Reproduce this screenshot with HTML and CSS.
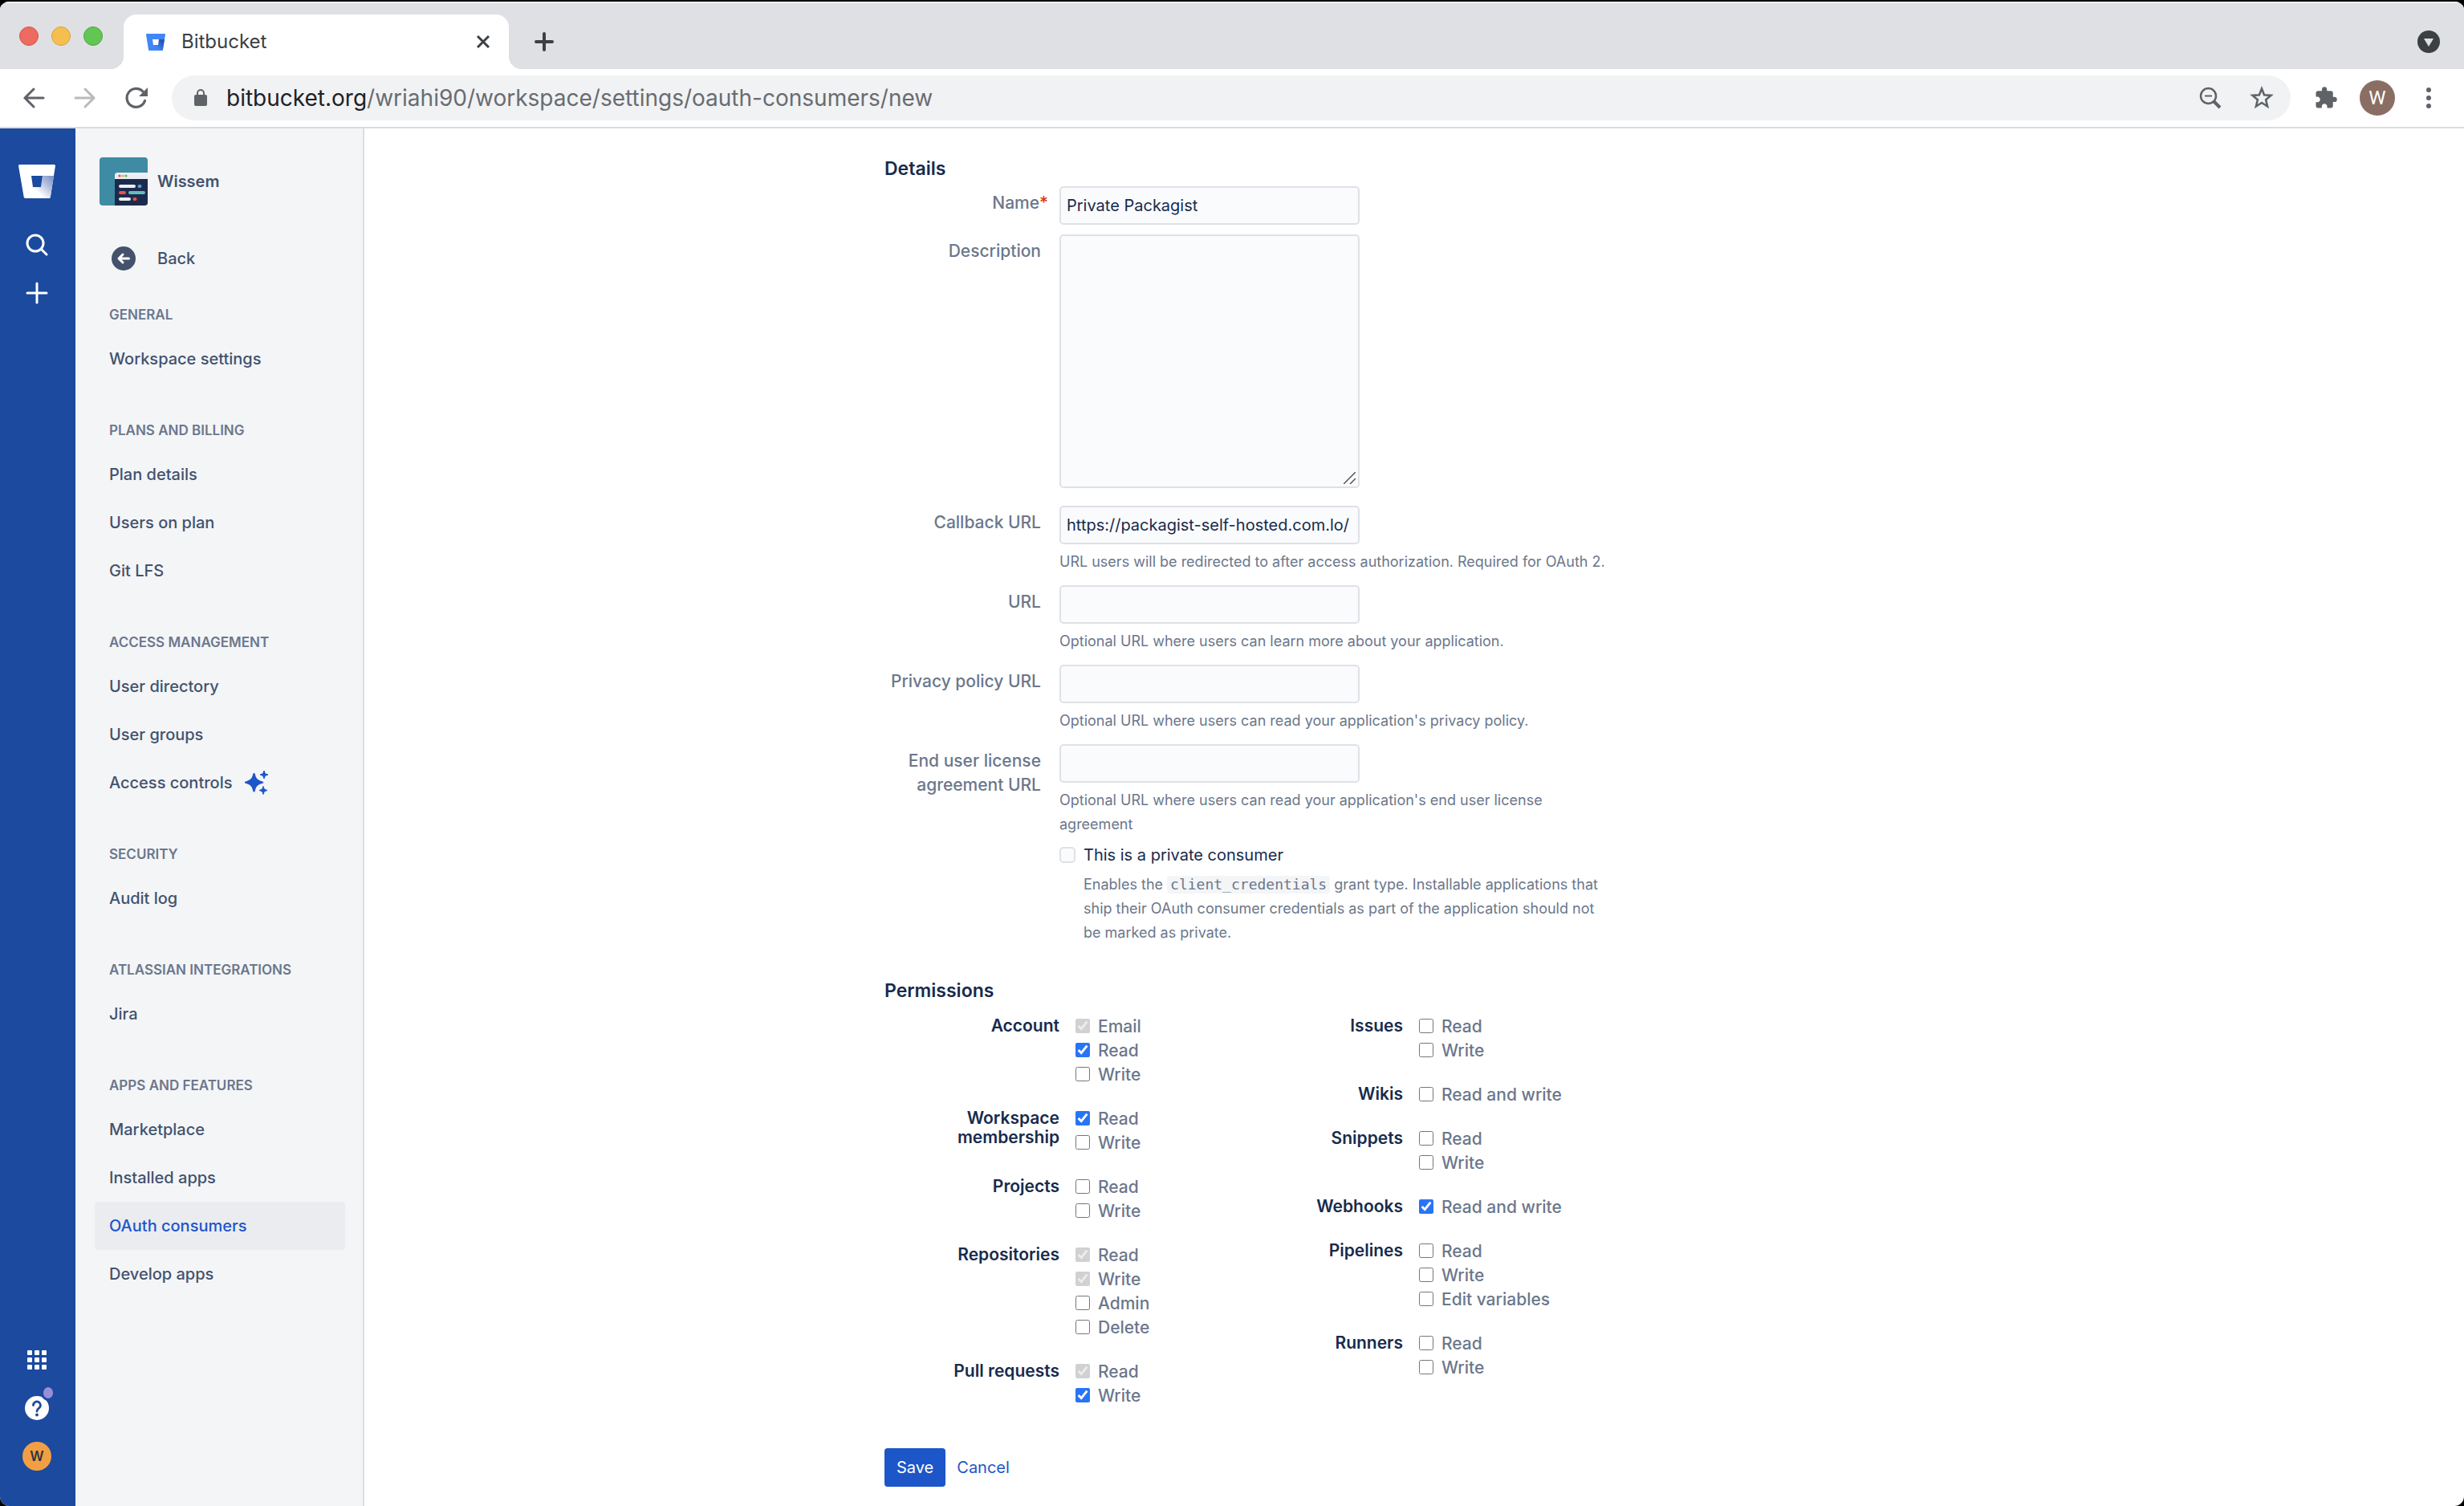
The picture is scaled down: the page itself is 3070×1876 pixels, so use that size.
FILE: index.html
```html
<!DOCTYPE html>
<html lang="en">
<head>
<meta charset="utf-8">
<title>Bitbucket</title>
<link rel="stylesheet" href="styles.css">
</head>
<body>
<div class="window">
  <header class="chrome">
    <div class="tabstrip">
      <div class="lights">
        <button class="light light-red" aria-label="Close window"></button>
        <button class="light light-yellow" aria-label="Minimize window"></button>
        <button class="light light-green" aria-label="Zoom window"></button>
      </div>
      <div class="tab">
        <svg class="favicon" viewBox="0 0 24 21" aria-hidden="true">
          <defs><linearGradient id="fav" x1="1" y1="0.2" x2="0.4" y2="0.8"><stop offset="0.2" stop-color="#2457b8"/><stop offset="1" stop-color="#4285f8"/></linearGradient></defs>
          <path fill="#4285f8" d="M1 0h22a1 1 0 0 1 1 1l-3 19a1 1 0 0 1-1 1H4a1 1 0 0 1-1-1L0 1a1 1 0 0 1 1-1z"/>
          <path fill="url(#fav)" d="M15 7h8l-2.500 14H8l2-7h4z"/>
          <path fill="#fff" d="M8 7h8l-1 7H9z"/>
        </svg>
        <span class="tab-title">Bitbucket</span>
        <button class="icon-button tab-close" aria-label="Close tab">
          <svg width="18" height="18" viewBox="0 0 18 18"><path d="M2 2l14 14M16 2L2 16" stroke="#3c4043" stroke-width="3"/></svg>
        </button>
      </div>
      <button class="icon-button new-tab" aria-label="New tab">
        <svg width="24" height="24" viewBox="0 0 24 24"><path d="M12 2v20M2 12h20" stroke="#3c4043" stroke-width="4" stroke-linecap="round"/></svg>
      </button>
      <button class="icon-button tab-search" aria-label="Search tabs">
        <svg width="28" height="28" viewBox="0 0 28 28"><circle cx="14" cy="14" r="14" fill="#3c4043"/><path d="M8 10h12l-6 10z" fill="#dfe0e4"/></svg>
      </button>
    </div>
    <div class="toolbar">
      <div class="nav-buttons">
        <button class="icon-button" aria-label="Back">
          <svg width="28" height="28" viewBox="0 0 28 28" fill="none" stroke="#5f6368" stroke-width="3" stroke-linecap="round"><path d="M26 14H3M14 3L3 14l11 11"/></svg>
        </button>
        <button class="icon-button" aria-label="Forward">
          <svg width="28" height="28" viewBox="0 0 28 28" fill="none" stroke="#bababb" stroke-width="3" stroke-linecap="round"><path d="M2 14h23M14 3l11 11-11 11"/></svg>
        </button>
        <button class="icon-button" aria-label="Reload">
          <svg width="28" height="28" viewBox="0 0 28 28"><path d="M24.500 17.500A11.500 11.500 0 1 1 22 6" fill="none" stroke="#5f6368" stroke-width="3.200" stroke-linecap="round"/><path d="M28 1v11H17z" fill="#5f6368"/></svg>
        </button>
      </div>
      <div class="omnibox">
        <svg class="lock" width="16" height="22" viewBox="0 0 16 22"><rect y="7" width="16" height="14" rx="2" fill="#5f6368"/><path d="M4 8V5a4 4 0 0 1 8 0v3" fill="none" stroke="#5f6368" stroke-width="2"/></svg>
        <div class="url" role="textbox" aria-label="Address"><span class="url-host">bitbucket.org</span>/wriahi90/workspace/settings/oauth-consumers/new</div>
        <button class="icon-button" aria-label="Zoom">
          <svg width="28" height="28" viewBox="0 0 28 28" fill="none" stroke="#5f6368"><circle cx="11.500" cy="11.500" r="9.500" stroke-width="2.500"/><path d="M7 11.500h9" stroke-width="2"/><path d="M18.500 18.500L26 26" stroke-width="4"/></svg>
        </button>
        <button class="icon-button" aria-label="Bookmark this tab">
          <svg width="30" height="30" viewBox="0 0 30 30" fill="none" stroke="#5f6368" stroke-width="2.600"><path d="M15 3.500l3.100 7.800 8.400.600-6.400 5.400 2 8.200-7.100-4.500-7.100 4.500 2-8.200-6.400-5.400 8.400-.600z"/></svg>
        </button>
      </div>
      <button class="icon-button" aria-label="Extensions">
        <svg width="30" height="30" viewBox="0 0 24 24"><path fill="#5f6368" d="M20.500 11H19V7c0-1.100-.9-2-2-2h-4V3.500a2.500 2.500 0 0 0-5 0V5H4c-1.100 0-1.990.9-1.990 2v3.800H3.500c1.490 0 2.700 1.210 2.700 2.700s-1.210 2.700-2.700 2.700H2V20c0 1.100.9 2 2 2h3.800v-1.500c0-1.490 1.210-2.700 2.700-2.700s2.700 1.210 2.700 2.700V22H17c1.100 0 2-.9 2-2v-4h1.500a2.500 2.500 0 0 0 0-5z"/></svg>
      </button>
      <button class="profile" aria-label="Profile">W</button>
      <button class="icon-button" aria-label="Menu">
        <svg width="8" height="28" viewBox="0 0 8 28" fill="#5f6368"><circle cx="4" cy="4" r="3"/><circle cx="4" cy="14" r="3"/><circle cx="4" cy="24" r="3"/></svg>
      </button>
    </div>
  </header>

  <div class="page">
    <nav class="rail" aria-label="Global">
      <div class="rail-group">
        <a class="rail-logo" href="#" aria-label="Bitbucket home">
          <svg width="46" height="42" viewBox="0 0 46 42">
            <defs><linearGradient id="logo" x1="1" y1="0.1" x2="0.35" y2="0.8"><stop offset="0" stop-color="#8094c8"/><stop offset="0.45" stop-color="#b3bfde"/><stop offset="1" stop-color="#fff"/></linearGradient></defs>
            <path fill="#fff" d="M1.500 0h43a1.500 1.500 0 0 1 1.500 1.500L39.800 40.500a1.800 1.800 0 0 1-1.800 1.500H8.500a1.800 1.800 0 0 1-1.800-1.500L0 1.500A1.500 1.500 0 0 1 1.500 0z"/>
            <path fill="url(#logo)" d="M30 14h14l-4.200 26.500a1.800 1.800 0 0 1-1.800 1.500H16l2-14h10z"/>
            <path fill="#1b4a9f" d="M16 14h14l-2 14H18z"/>
          </svg>
        </a>
        <button class="icon-button" aria-label="Search">
          <svg width="28" height="28" viewBox="0 0 28 28" fill="none" stroke="#fff" stroke-width="3" stroke-linecap="round"><circle cx="12" cy="12" r="10"/><path d="M19.500 19.500L26 26"/></svg>
        </button>
        <button class="icon-button" aria-label="Create">
          <svg width="28" height="28" viewBox="0 0 28 28" stroke="#fff" stroke-width="3" stroke-linecap="round"><path d="M14 2v24M2 14h24"/></svg>
        </button>
      </div>
      <div class="rail-group">
        <button class="icon-button" aria-label="Switch to">
          <svg width="24" height="24" viewBox="0 0 24 24" fill="#fff"><rect width="6" height="6" rx="1"/><rect x="9" width="6" height="6" rx="1"/><rect x="18" width="6" height="6" rx="1"/><rect y="9" width="6" height="6" rx="1"/><rect x="9" y="9" width="6" height="6" rx="1"/><rect x="18" y="9" width="6" height="6" rx="1"/><rect y="18" width="6" height="6" rx="1"/><rect x="9" y="18" width="6" height="6" rx="1"/><rect x="18" y="18" width="6" height="6" rx="1"/></svg>
        </button>
        <button class="icon-button" aria-label="Help">
          <svg class="help-icon" width="44" height="44" viewBox="0 0 44 44"><circle cx="22" cy="22" r="15" fill="#fff"/><path d="M17.500 18.500a4.500 4.500 0 1 1 7 3.700c-1.700 1.100-2.500 1.800-2.500 3.800" fill="none" stroke="#1b4a9f" stroke-width="2.800" stroke-linecap="round"/><circle cx="22" cy="30.500" r="1.900" fill="#1b4a9f"/><ellipse cx="36" cy="3" rx="9" ry="10" fill="#1b4a9f"/><ellipse cx="36" cy="3" rx="6" ry="7" fill="#998dd9"/></svg>
        </button>
        <button class="account" aria-label="Your profile">W</button>
      </div>
    </nav>

    <aside class="sidebar">
      <a class="workspace" href="#">
        <svg width="60" height="60" viewBox="0 0 60 60">
          <defs><clipPath id="round"><rect width="60" height="60" rx="4"/></clipPath></defs>
          <g clip-path="url(#round)">
            <rect width="60" height="60" fill="#3f8ba3"/>
            <path d="M19 22a3 3 0 0 1 3-3h38v41H19z" fill="#1c2b4d"/>
            <path d="M19 27v-5a3 3 0 0 1 3-3h38v8z" fill="#ebeef4"/>
            <circle cx="25" cy="23" r="1.600" fill="#e2504a"/><circle cx="29" cy="23" r="1.600" fill="#f0ad3e"/><circle cx="33" cy="23" r="1.600" fill="#5bb85b"/>
            <g stroke-width="4" stroke-linecap="round"><path d="M26 36h17M26 52h11" stroke="#ebeef4"/><path d="M49.500 36h1" stroke="#5b9fd4"/><path d="M26 44h5M43.500 52h1" stroke="#ec5145"/><path d="M38 44h17" stroke="#66bcbb"/></g>
          </g>
        </svg>
        <span>Wissem</span>
      </a>
      <a class="back" href="#">
        <svg width="30" height="30" viewBox="0 0 30 30"><circle cx="15" cy="15" r="15" fill="#44526d"/><path d="M21.500 15H9.500M14 10l-5 5 5 5" fill="none" stroke="#fff" stroke-width="3" stroke-linecap="round" stroke-linejoin="round"/></svg>
        <span>Back</span>
      </a>
      <section class="nav-section">
        <h3>GENERAL</h3>
        <a href="#">Workspace settings</a>
      </section>
      <section class="nav-section">
        <h3>PLANS AND BILLING</h3>
        <a href="#">Plan details</a>
        <a href="#">Users on plan</a>
        <a href="#">Git LFS</a>
      </section>
      <section class="nav-section">
        <h3>ACCESS MANAGEMENT</h3>
        <a href="#">User directory</a>
        <a href="#">User groups</a>
        <a href="#">Access controls
          <svg width="30" height="30" viewBox="0 0 30 30" fill="#1d56c8"><path d="M11.500 3c.800 0 1 .400 1.200 1.100 1.300 5.200 2.600 7.500 9.300 9.400 1.800.500 1.800 1.800 0 2.300-6.700 1.900-8 4.500-9.300 9.700-.200.700-.400 1.100-1.200 1.100s-1-.400-1.200-1.100C9 20.300 7.700 17.700 1 15.800c-1.800-.500-1.800-1.800 0-2.300 6.700-1.900 8-4.200 9.300-9.400.200-.700.400-1.100 1.200-1.100z"/><path d="M24 0c.900 3.400 1.500 4.100 5 5-3.500 1-4.100 1.600-5 5-.900-3.400-1.500-4-5-5 3.500-.9 4.100-1.600 5-5zM23 19.500c.900 3.400 1.500 4.100 5 5-3.500 1-4.100 1.600-5 5-.900-3.400-1.500-4-5-5 3.500-.9 4.100-1.600 5-5z" stroke="#1d56c8" stroke-linejoin="round"/></svg>
        </a>
      </section>
      <section class="nav-section">
        <h3>SECURITY</h3>
        <a href="#">Audit log</a>
      </section>
      <section class="nav-section">
        <h3>ATLASSIAN INTEGRATIONS</h3>
        <a href="#">Jira</a>
      </section>
      <section class="nav-section">
        <h3>APPS AND FEATURES</h3>
        <a href="#">Marketplace</a>
        <a href="#">Installed apps</a>
        <a class="active" href="#" aria-current="page">OAuth consumers</a>
        <a href="#">Develop apps</a>
      </section>
    </aside>

    <main class="content">
      <form class="form">
        <h2>Details</h2>
        <div class="field">
          <label class="field-label" for="name">Name<span class="required">*</span></label>
          <div class="field-body"><input class="text" id="name" type="text" value="Private Packagist"></div>
        </div>
        <div class="field">
          <label class="field-label" for="description">Description</label>
          <div class="field-body">
            <div class="textarea-wrap">
              <textarea class="text" id="description"></textarea>
              <svg class="grip" width="15" height="15" viewBox="0 0 15 15"><path d="M0 15L15 0M8 15l7-7" stroke="#555" stroke-width="1.500"/></svg>
            </div>
          </div>
        </div>
        <div class="field field-callback">
          <label class="field-label" for="callback">Callback URL</label>
          <div class="field-body">
            <input class="text" id="callback" type="text" value="https://packagist-self-hosted.com.lo/">
            <p class="hint">URL users will be redirected to after access authorization. Required for OAuth 2.</p>
          </div>
        </div>
        <div class="field">
          <label class="field-label" for="url">URL</label>
          <div class="field-body">
            <input class="text" id="url" type="text">
            <p class="hint">Optional URL where users can learn more about your application.</p>
          </div>
        </div>
        <div class="field">
          <label class="field-label" for="privacy">Privacy policy URL</label>
          <div class="field-body">
            <input class="text" id="privacy" type="text">
            <p class="hint">Optional URL where users can read your application's privacy policy.</p>
          </div>
        </div>
        <div class="field">
          <label class="field-label" for="eula">End user license agreement URL</label>
          <div class="field-body">
            <input class="text" id="eula" type="text">
            <p class="hint">Optional URL where users can read your application's end user license agreement</p>
            <div class="private">
              <input type="checkbox" id="private">
              <label for="private">This is a private consumer</label>
              <p class="hint">Enables the <code>client_credentials</code> grant type. Installable applications that ship their OAuth consumer credentials as part of the application should not be marked as private.</p>
            </div>
          </div>
        </div>

        <h2 class="permissions-title">Permissions</h2>
        <div class="permissions">
          <div class="permission-column">
            <div class="permission" role="group" aria-labelledby="p-account">
              <h4 id="p-account">Account</h4>
              <div class="options">
                <label><input type="checkbox" checked disabled>Email</label>
                <label><input type="checkbox" checked>Read</label>
                <label><input type="checkbox">Write</label>
              </div>
            </div>
            <div class="permission" role="group" aria-labelledby="p-workspace">
              <h4 id="p-workspace">Workspace membership</h4>
              <div class="options">
                <label><input type="checkbox" checked>Read</label>
                <label><input type="checkbox">Write</label>
              </div>
            </div>
            <div class="permission" role="group" aria-labelledby="p-projects">
              <h4 id="p-projects">Projects</h4>
              <div class="options">
                <label><input type="checkbox">Read</label>
                <label><input type="checkbox">Write</label>
              </div>
            </div>
            <div class="permission" role="group" aria-labelledby="p-repositories">
              <h4 id="p-repositories">Repositories</h4>
              <div class="options">
                <label><input type="checkbox" checked disabled>Read</label>
                <label><input type="checkbox" checked disabled>Write</label>
                <label><input type="checkbox">Admin</label>
                <label><input type="checkbox">Delete</label>
              </div>
            </div>
            <div class="permission" role="group" aria-labelledby="p-pull">
              <h4 id="p-pull">Pull requests</h4>
              <div class="options">
                <label><input type="checkbox" checked disabled>Read</label>
                <label><input type="checkbox" checked>Write</label>
              </div>
            </div>
          </div>
          <div class="permission-column">
            <div class="permission" role="group" aria-labelledby="p-issues">
              <h4 id="p-issues">Issues</h4>
              <div class="options">
                <label><input type="checkbox">Read</label>
                <label><input type="checkbox">Write</label>
              </div>
            </div>
            <div class="permission" role="group" aria-labelledby="p-wikis">
              <h4 id="p-wikis">Wikis</h4>
              <div class="options">
                <label><input type="checkbox">Read and write</label>
              </div>
            </div>
            <div class="permission" role="group" aria-labelledby="p-snippets">
              <h4 id="p-snippets">Snippets</h4>
              <div class="options">
                <label><input type="checkbox">Read</label>
                <label><input type="checkbox">Write</label>
              </div>
            </div>
            <div class="permission" role="group" aria-labelledby="p-webhooks">
              <h4 id="p-webhooks">Webhooks</h4>
              <div class="options">
                <label><input type="checkbox" checked>Read and write</label>
              </div>
            </div>
            <div class="permission" role="group" aria-labelledby="p-pipelines">
              <h4 id="p-pipelines">Pipelines</h4>
              <div class="options">
                <label><input type="checkbox">Read</label>
                <label><input type="checkbox">Write</label>
                <label><input type="checkbox">Edit variables</label>
              </div>
            </div>
            <div class="permission" role="group" aria-labelledby="p-runners">
              <h4 id="p-runners">Runners</h4>
              <div class="options">
                <label><input type="checkbox">Read</label>
                <label><input type="checkbox">Write</label>
              </div>
            </div>
          </div>
        </div>
        <div class="actions">
          <button class="save" type="button">Save</button>
          <a href="#">Cancel</a>
        </div>
      </form>
    </main>
  </div>
</div>
</body>
</html>
```
FILE: styles.css
```css
* {
  box-sizing: border-box;
}

html {
  background: #000;
}

body {
  margin: 0;
  font-family: Inter, "Liberation Sans", sans-serif;
  font-size: 20px;
  line-height: 30px;
  color: #172b4d;
}

h2,
h3,
h4,
p {
  margin: 0;
}

a {
  color: inherit;
  text-decoration: none;
}

button,
input,
textarea {
  font: inherit;
  color: inherit;
}

svg {
  display: block;
  flex: none;
}

.window {
  display: flex;
  flex-direction: column;
  min-height: 100vh;
  border-top: 2px solid #000;
  border-radius: 12px;
  overflow: hidden;
  background: #fff;
}

.icon-button {
  display: flex;
  align-items: center;
  justify-content: center;
  width: 40px;
  height: 40px;
  padding: 0;
  border: 0;
  background: none;
  flex: none;
}

/* Browser frame */

.tabstrip {
  display: flex;
  align-items: flex-end;
  height: 84px;
  padding: 0 24px;
  background: #dfe0e4;
  box-shadow: inset 0 2px 0 #f0f0f2;
}

.lights {
  display: flex;
  gap: 16px;
  padding-bottom: 29px;
}

.light {
  width: 24px;
  height: 24px;
  padding: 0;
  border: 1px solid;
  border-radius: 50%;
}

.light-red {
  background: #ed6b60;
  border-color: #d8534a;
}

.light-yellow {
  background: #f5bf4f;
  border-color: #d9a13c;
}

.light-green {
  background: #62c655;
  border-color: #4ca83e;
}

.tab {
  position: relative;
  display: flex;
  align-items: center;
  width: 480px;
  height: 68px;
  margin: 0 24px 0 26px;
  padding: 0 12px 0 28px;
  border-radius: 16px 16px 0 0;
  background: #fff;
}

.tab::before,
.tab::after {
  content: "";
  position: absolute;
  bottom: 0;
  width: 16px;
  height: 16px;
}

.tab::before {
  right: 100%;
  background: radial-gradient(circle at 0 0, transparent 16px, #fff 16px);
}

.tab::after {
  left: 100%;
  background: radial-gradient(circle at 100% 0, transparent 16px, #fff 16px);
}

.favicon {
  width: 24px;
  height: 21px;
}

.tab-title {
  flex: 1;
  margin-left: 20px;
  font-size: 24px;
  color: #3c4043;
}

.new-tab {
  margin-bottom: 14px;
}

.tab-search {
  margin: 0 0 14px auto;
}

.toolbar {
  display: flex;
  align-items: center;
  gap: 24px;
  height: 74px;
  padding: 0 24px 0 22px;
  border-bottom: 2px solid #dadbdd;
  background: #fff;
}

.nav-buttons {
  display: flex;
  gap: 24px;
}

.omnibox {
  display: flex;
  align-items: center;
  gap: 24px;
  flex: 1;
  height: 56px;
  padding: 0 16px 0 28px;
  border-radius: 28px;
  background: #f1f2f4;
}

.url {
  flex: 1;
  font-size: 28px;
  color: #686c70;
}

.url-host {
  color: #202124;
}

.profile {
  width: 44px;
  height: 44px;
  margin: 0 -2px;
  padding: 0;
  border: 0;
  border-radius: 50%;
  background: #8a6e64;
  color: #fff;
  font-family: Roboto, sans-serif;
  font-size: 24px;
}

/* Page shell */

.page {
  display: flex;
  flex: 1;
}

.rail {
  display: flex;
  flex-direction: column;
  justify-content: space-between;
  width: 94px;
  padding: 45px 2px 42px 0;
  background: #1b4a9f;
}

.rail-group {
  display: flex;
  flex-direction: column;
  align-items: center;
  gap: 20px;
}

.rail-logo {
  margin-bottom: 18px;
}

.help-icon {
  overflow: visible;
}

.account {
  width: 36px;
  height: 36px;
  margin: 2px;
  padding: 0;
  border: 0;
  border-radius: 50%;
  background: #f29f43;
  color: #303540;
  font-size: 17px;
  font-weight: 600;
}

.sidebar {
  width: 360px;
  padding: 36px 22px 20px 24px;
  border-right: 2px solid #dcdee2;
  background: #f4f5f7;
  color: #42526e;
  font-weight: 500;
}

.workspace,
.back {
  display: flex;
  align-items: center;
}

.workspace {
  gap: 12px;
  margin-left: 6px;
  font-weight: 600;
}

.back {
  gap: 27px;
  height: 60px;
  margin: 36px 0 25px;
  padding-left: 21px;
}

.nav-section {
  margin-bottom: 44px;
}

.nav-section h3 {
  height: 40px;
  padding: 0 18px;
  font-size: 17px;
  font-weight: 600;
  color: #6b778c;
}

.nav-section a {
  display: flex;
  align-items: center;
  gap: 16px;
  height: 60px;
  padding: 0 18px;
  border-radius: 4px;
}

.nav-section .active {
  background: #ebecf0;
  color: #1d56c8;
}

/* Form */

.content {
  flex: 1;
  min-width: 0;
}

.form {
  max-width: 1320px;
  margin: 0 auto;
  padding-top: 35px;
}

.form h2 {
  font-size: 23px;
  font-weight: 600;
}

.field {
  display: flex;
  gap: 23px;
  margin-top: 14px;
}

.form h2 + .field {
  margin-top: 7px;
}

.form h2 + .field + .field {
  margin-top: 12px;
}

.form .field-callback {
  margin-top: 22px;
}

.field-label {
  width: 195px;
  padding-top: 6px;
  text-align: right;
  font-size: 21px;
  font-weight: 500;
  color: #6b778c;
}

.required {
  margin-right: -9px;
  color: #de350b;
}

.field-body {
  width: 690px;
}

.text {
  display: block;
  width: 374px;
  height: 48px;
  padding: 0 7px;
  border: 2px solid #dfe1e6;
  border-radius: 5px;
  background: #fafbfc;
}

.textarea-wrap {
  position: relative;
  width: 374px;
}

textarea.text {
  height: 316px;
  resize: none;
}

.grip {
  position: absolute;
  right: 5px;
  bottom: 5px;
}

.hint {
  margin-top: 7px;
  font-size: 18px;
  color: #6b778c;
}

.private {
  display: grid;
  grid-template-columns: 20px 1fr;
  column-gap: 10px;
  align-items: center;
  margin-top: 8px;
}

.private input {
  appearance: none;
  width: 20px;
  height: 20px;
  margin: 0;
  border: 2px solid #dfe1e6;
  border-radius: 5px;
  background: #fafbfc;
}

.private .hint {
  grid-column: 2;
}

.hint code {
  display: inline-block;
  padding: 0 4px;
  border-radius: 4px;
  background: #f4f5f7;
  font-family: "DejaVu Sans Mono", monospace;
  font-size: 18px;
  line-height: 22px;
}

.form .permissions-title {
  margin-top: 42px;
}

.permissions {
  display: flex;
  margin-top: 14px;
}

.permission-column {
  display: flex;
  flex-direction: column;
  gap: 25px;
  width: 428px;
}

.permission {
  display: flex;
  gap: 20px;
}

.permission h4 {
  width: 218px;
  padding: 3px 0 0 40px;
  text-align: right;
  font-size: 21px;
  line-height: 24px;
  font-weight: 600;
}

.options label {
  display: flex;
  align-items: center;
  gap: 10px;
  height: 30px;
  padding-top: 2px;
  font-size: 21px;
  font-weight: 500;
  color: #6b778c;
}

.options input {
  width: 18px;
  height: 18px;
  margin: 0 0 3px;
  accent-color: #2874f6;
}

.actions {
  display: flex;
  align-items: center;
  gap: 14px;
  margin: 51px 0 20px;
  color: #1d56c8;
}

.save {
  height: 48px;
  padding: 0 15px;
  border: 0;
  border-radius: 4px;
  background: #1d56c8;
  color: #fff;
}
```
